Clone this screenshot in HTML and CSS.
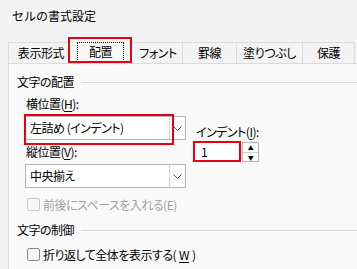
FILE: index.html
```html
<!DOCTYPE html>
<html lang="ja">
<head>
<meta charset="UTF-8" />
<title>セルの書式設定</title>
<link rel="stylesheet" href="styles.css">
</head>
<body>
  <!-- Title -->
  <div class="title">セルの書式設定</div>

  <!-- Tabs -->
  <div class="tabs">
    <div class="tab">表示形式</div>
    <div class="tab active"><span class="focus">配置</span></div>
    <div class="tab">フォント</div>
    <div class="tab">罫線</div>
    <div class="tab">塗りつぶし</div>
    <div class="tab">保護</div>
  </div>

  <!-- Alignment page -->
  <div class="panel">
    <div class="group">文字の配置</div>

    <div class="align">
      <div class="col-left">
        <div class="label">横位置(<u>H</u>):</div>
        <div class="combo marked">
          <span class="value">左詰め (インデント)</span>
          <span class="drop">
            <svg width="9" height="5" viewBox="0 0 9 5"><path d="M0.5 0.5 L4.5 4.5 L8.5 0.5" fill="none" stroke="#555" stroke-width="1"/></svg>
          </span>
        </div>
        <div class="label">縦位置(<u>V</u>):</div>
        <div class="combo">
          <span class="value">中央揃え</span>
          <span class="drop">
            <svg width="9" height="5" viewBox="0 0 9 5"><path d="M0.5 0.5 L4.5 4.5 L8.5 0.5" fill="none" stroke="#555" stroke-width="1"/></svg>
          </span>
        </div>
      </div>
      <div class="col-right">
        <div class="label">インデント(<u>I</u>):</div>
        <div class="spin">
          <div class="spin-box">1</div>
          <div class="arrows">
            <span class="arrow">▲</span>
            <span class="arrow">▼</span>
          </div>
        </div>
      </div>
    </div>

    <div class="check disabled"><span class="box"></span>前後にスペースを入れる(E)</div>

    <div class="group second">文字の制御</div>

    <div class="check wrap"><span class="box"></span>折り返して全体を表示する(<u>W</u>)</div>
  </div>
</body>
</html>
```

FILE: styles.css
```css
/* Base */
* {
  box-sizing: border-box;
}
html, body {
  margin: 0;
  padding: 0;
}
body {
  width: 357px;
  height: 269px;
  overflow: hidden;
  background: #f3f3f3;
  color: #000;
  font-family: "Noto Sans CJK JP", "Noto Sans", sans-serif;
  font-size: 12px;
}
u {
  text-decoration: underline;
  text-underline-offset: 2px;
}

/* Title */
.title {
  height: 37px;
  padding: 8px 0 0 12px;
  line-height: 16px;
}

/* Tabs */
.tabs {
  display: flex;
  align-items: flex-end;
  height: 26px;
  padding-left: 8px;
  font-feature-settings: "palt";
  letter-spacing: -0.4px;
}
.tab {
  height: 21px;
  line-height: 20px;
  text-align: center;
  border: 1px solid #dcdcdc;
  border-bottom: none;
  margin-right: -1px;
  background: #f3f3f3;
}
.tab:nth-child(1) { width: 60px; padding-left: 6px; }
.tab:nth-child(2) { width: 67px; }
.tab:nth-child(3) { width: 50px; }
.tab:nth-child(4) { width: 55px; }
.tab:nth-child(5) { width: 67px; }
.tab:nth-child(6) { width: 53px; }

.tab.active {
  position: relative;
  height: 26px;
  display: flex;
  align-items: center;
  justify-content: center;
  padding-top: 2px;
  background: #f9f9f9;
  border-color: #f9f9f9;
  z-index: 1;
}
.tab.active::after {
  content: "";
  position: absolute;
  left: 0;
  right: 1px;
  top: -1px;
  bottom: 0;
  border: 2px solid #e60012;
}
.focus {
  width: 47px;
  height: 20px;
  line-height: 18px;
  border: 1px dotted #000;
}

/* Page */
.panel {
  height: 206px;
  margin-left: 8px;
  padding: 10px 0 0 8px;
  background: #f9f9f9;
  border-top: 1px solid #dcdcdc;
  border-left: 1px solid #dcdcdc;
  font-feature-settings: "palt";
  letter-spacing: -0.5px;
}
.group {
  display: flex;
  align-items: center;
  gap: 7px;
  line-height: 16px;
}
.group::after {
  content: "";
  flex: 1;
  height: 1px;
  background: #d9d9d9;
}
.group.second {
  margin-top: 10px;
}

.label {
  line-height: 16px;
  padding-left: 1px;
}

.align {
  display: flex;
  margin-top: 6px;
  padding-left: 8px;
}
.col-left {
  width: 161px;
}
.col-right {
  margin-left: 7px;
  padding-top: 28px;
}
.col-right .label {
  padding-left: 3px;
}

.combo {
  position: relative;
  display: flex;
  height: 24px;
  margin: 4px 0;
  background: #fff;
  border: 1px solid #b4b4b4;
}
.combo .value {
  flex: 1;
  padding-left: 4px;
  line-height: 22px;
}
.combo .drop {
  width: 16px;
  display: flex;
  align-items: center;
  justify-content: center;
  border-left: 1px solid #d6d6d6;
}
.combo.marked::after {
  content: "";
  position: absolute;
  left: -2px;
  top: -3px;
  width: 146px;
  height: 27px;
  border: 2px solid #e60012;
}

.spin {
  display: flex;
  gap: 1px;
  margin-top: 1px;
}
.spin-box {
  width: 48px;
  height: 21px;
  padding-left: 6px;
  line-height: 18px;
  background: #fff;
  border: 2px solid #e60012;
}
.arrows {
  display: flex;
  flex-direction: column;
  width: 17px;
  height: 20px;
  margin-top: 1px;
  border: 1px solid #b4b4b4;
  background: #fff;
}
.arrow {
  flex: 1;
  font-size: 6px;
  line-height: 9px;
  text-align: center;
}
.arrow + .arrow {
  border-top: 1px solid #d0d0d0;
}

/* Checkboxes */
.check {
  display: flex;
  align-items: center;
  gap: 3px;
  height: 16px;
  margin-top: 4px;
  padding-left: 10px;
}
.check .box {
  width: 13px;
  height: 13px;
  border: 1px solid #8a8a8a;
  border-radius: 2px;
  background: #f7f7f7;
}
.check.disabled {
  color: #a0a0a0;
}
.check.disabled .box {
  border-color: #c8c8c8;
}
.check.wrap {
  margin-top: 8px;
}
```
